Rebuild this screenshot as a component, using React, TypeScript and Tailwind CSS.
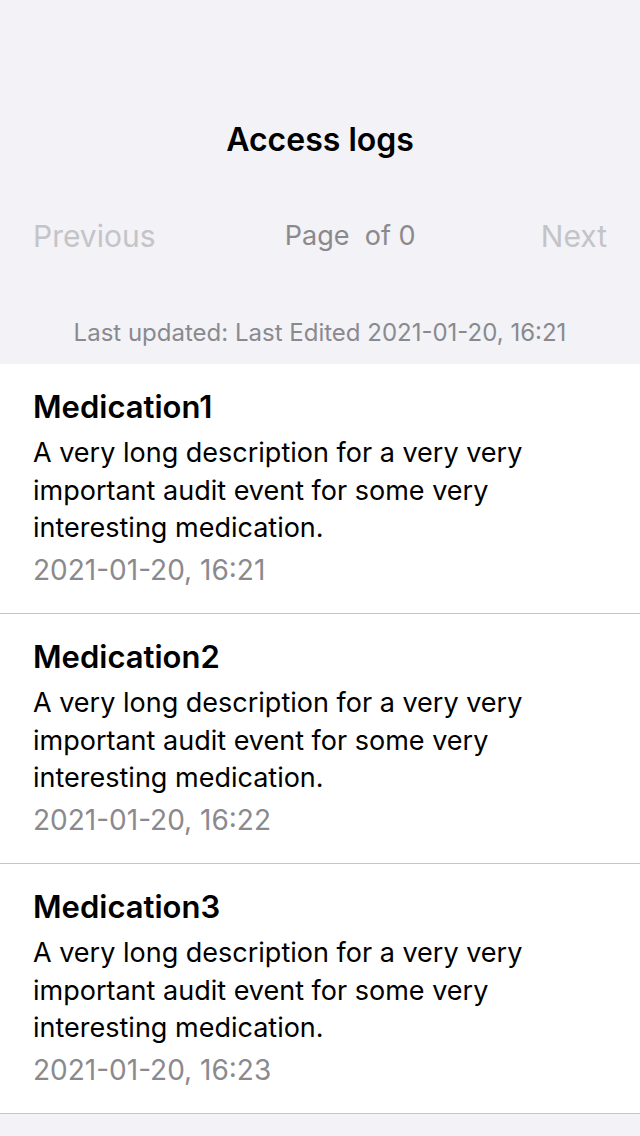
const logs = [
  { title: "Medication1", time: "2021-01-20, 16:21" },
  { title: "Medication2", time: "2021-01-20, 16:22" },
  { title: "Medication3", time: "2021-01-20, 16:23" },
];

const description =
  "A very long description for a very very important audit event for some very interesting medication.";

const LogRow = ({ title, time }: { title: string; time: string }) => {
  return (
    <li className="bg-white border-b border-[#c6c6c8] px-[33px] pt-[23px] pb-[24px]">
      <h2 className="text-[31px] leading-[40px] font-semibold text-black">{title}</h2>
      <p className="mt-[7px] text-[27px] leading-[37.5px] text-black pr-[80px]">{description}</p>
      <p className="mt-[4.5px] text-[28px] leading-[38px] text-[#8a8a8e]">{time}</p>
    </li>
  );
};

const App = () => {
  return (
    <div
      className="min-h-screen bg-[#f2f2f7] antialiased"
      style={{ fontFamily: "Inter, 'Noto Sans', sans-serif" }}
    >
      <header className="pt-[120px] pb-[17px]">
        <h1 className="text-center text-[32px] leading-[40px] font-semibold text-black">
          Access logs
        </h1>
        <nav className="mt-[56px] flex items-center justify-between px-[33px] h-[40px]">
          <button className="text-[30px] text-[#c4c4c8]">Previous</button>
          <span className="text-[27px] text-[#8a8a8e] pl-[4px]">Page&nbsp; of 0</span>
          <button className="text-[30px] text-[#c4c4c8]">Next</button>
        </nav>
        <p className="mt-[63px] text-center text-[24px] leading-[28px] text-[#8a8a8e]">
          Last updated: Last Edited 2021-01-20, 16:21
        </p>
      </header>
      <ul>
        {logs.map((log) => (
          <LogRow key={log.title} title={log.title} time={log.time} />
        ))}
      </ul>
    </div>
  );
};

export default App;
